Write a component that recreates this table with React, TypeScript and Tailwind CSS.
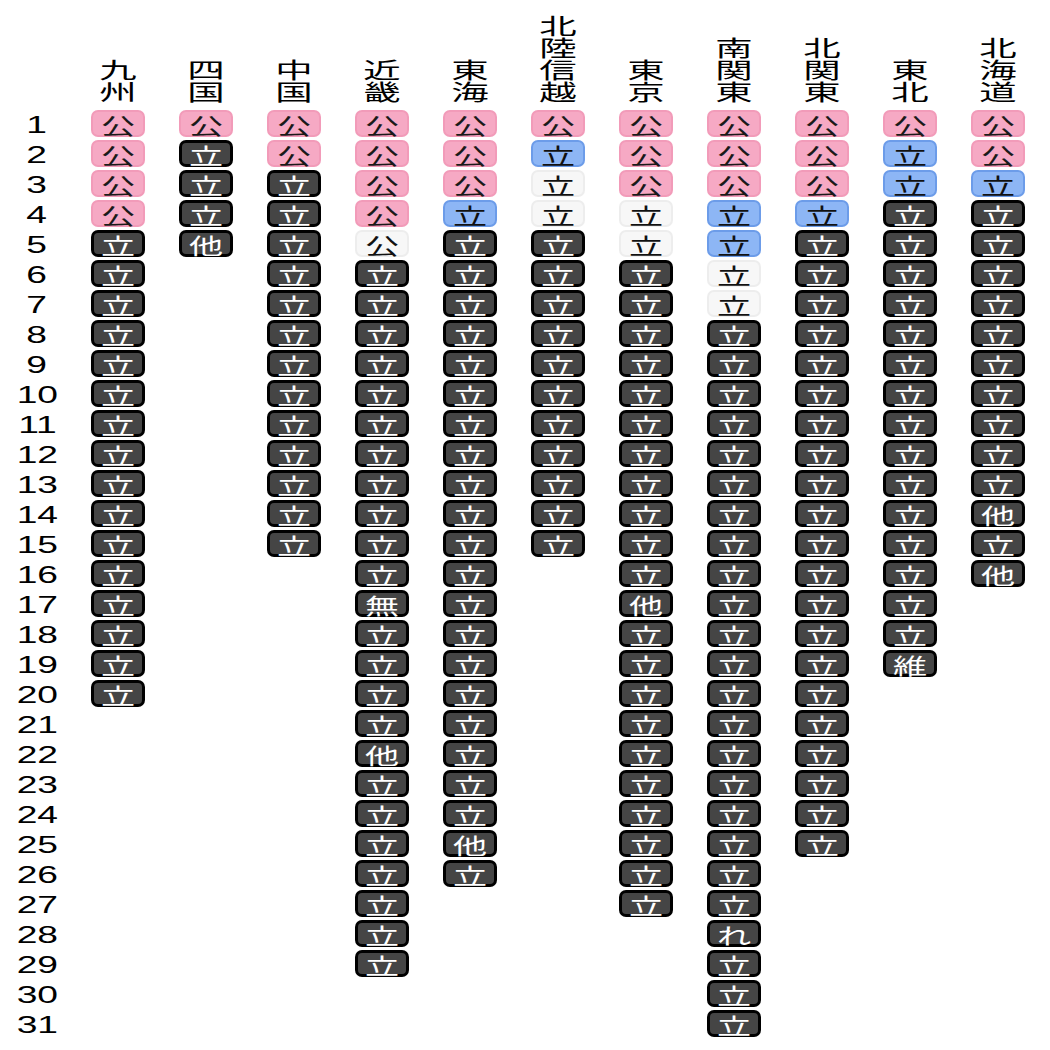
import React from 'react';

type Kind = 'pink' | 'blue' | 'light' | 'dark';
type Cell = { kind: Kind; label: string };

// p=公(pink) b=立(blue) l=立(light) k=公(light) d=立(dark) t=他 m=無 r=れ i=維
const CODE: Record<string, Cell> = {
  p: { kind: 'pink', label: '公' },
  b: { kind: 'blue', label: '立' },
  l: { kind: 'light', label: '立' },
  k: { kind: 'light', label: '公' },
  d: { kind: 'dark', label: '立' },
  t: { kind: 'dark', label: '他' },
  m: { kind: 'dark', label: '無' },
  r: { kind: 'dark', label: 'れ' },
  i: { kind: 'dark', label: '維' },
};

const rep = (c: string, n: number) => c.repeat(n);

const REGIONS: { name: string[]; cells: string }[] = [
  { name: ['九', '州'], cells: rep('p', 4) + rep('d', 16) },
  { name: ['四', '国'], cells: 'pdddt' },
  { name: ['中', '国'], cells: 'pp' + rep('d', 13) },
  { name: ['近', '畿'], cells: rep('p', 4) + 'k' + rep('d', 11) + 'm' + rep('d', 4) + 't' + rep('d', 7) },
  { name: ['東', '海'], cells: 'pppb' + rep('d', 20) + 'td' },
  { name: ['北', '陸', '信', '越'], cells: 'pbll' + rep('d', 11) },
  { name: ['東', '京'], cells: 'pppll' + rep('d', 11) + 't' + rep('d', 10) },
  { name: ['南', '関', '東'], cells: 'pppbbll' + rep('d', 20) + 'r' + 'ddd' },
  { name: ['北', '関', '東'], cells: 'pppb' + rep('d', 21) },
  { name: ['東', '北'], cells: 'pbb' + rep('d', 15) + 'i' },
  { name: ['北', '海', '道'], cells: 'ppb' + rep('d', 10) + 'tdt' },
];

const ROWS = 31;

const OUTER: Record<Kind, string> = {
  pink: 'bg-[#f29bb9] p-[2px]',
  blue: 'bg-[#6c9ce9] p-[2px]',
  light: 'bg-[#ededed] p-[2px]',
  dark: 'bg-black p-[3px]',
};

const INNER: Record<Kind, string> = {
  pink: 'bg-[#f6a9c4] text-[#1a1a1a] rounded-[5px]',
  blue: 'bg-[#8db6f5] text-[#111] rounded-[5px]',
  light: 'bg-[#f7f7f7] text-[#111] rounded-[5px]',
  dark: 'bg-[#454545] text-white rounded-[4px]',
};

function Badge({ cell }: { cell: Cell }) {
  return (
    <div className={`w-[54px] h-[27px] rounded-[7px] ${OUTER[cell.kind]}`}>
      <div className={`w-full h-full flex items-center justify-center ${INNER[cell.kind]}`}>
        <span className="inline-block text-[22px] leading-none scale-x-[1.55]">{cell.label}</span>
      </div>
    </div>
  );
}

export default function App() {
  return (
    <div
      className="w-[1050px] h-[1050px] bg-white text-black overflow-hidden"
      style={{ fontFamily: '"Noto Sans CJK JP", "Noto Sans", sans-serif' }}
    >
      <div className="grid grid-cols-[74px_repeat(11,88px)]">
        {/* header row */}
        <div className="h-[110px]" />
        {REGIONS.map((r) => (
          <div key={r.name.join('')} className="h-[110px] flex flex-col items-center justify-end pb-[9px]">
            {r.name.map((ch, i) => (
              <span key={i} className="inline-block text-[22px] leading-[22px] scale-x-[1.7]">
                {ch}
              </span>
            ))}
          </div>
        ))}

        {/* row numbers */}
        <div className="flex flex-col" style={{ fontFamily: '"Liberation Sans", Arial, sans-serif' }}>
          {Array.from({ length: ROWS }, (_, i) => (
            <div key={i} className="h-[30px] flex items-center justify-center">
              <span className="inline-block text-[24px] leading-none scale-x-[1.55]">{i + 1}</span>
            </div>
          ))}
        </div>

        {/* region columns */}
        {REGIONS.map((r) => (
          <div key={r.name.join('')} className="flex flex-col items-center gap-[3px]">
            {r.cells.split('').map((c, i) => (
              <Badge key={i} cell={CODE[c]} />
            ))}
          </div>
        ))}
      </div>
    </div>
  );
}
